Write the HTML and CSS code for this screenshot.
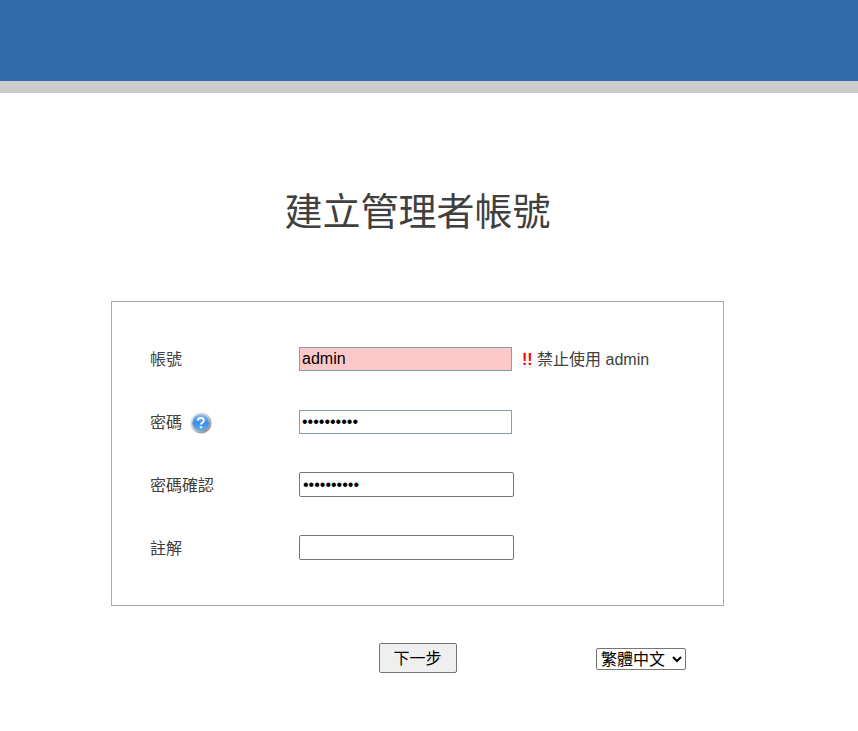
FILE: index.html
```html
<!DOCTYPE html>
<html lang="zh-Hant">
<head>
<meta charset="utf-8">
<meta name="viewport" content="width=device-width, initial-scale=1">
<title>建立管理者帳號</title>
<link rel="stylesheet" href="styles.css">
</head>
<body>
<header class="banner"></header>
<main class="page">
  <h1 class="title">建立管理者帳號</h1>
  <form class="setup">
    <div class="panel">
      <div class="row">
        <div class="name"><label for="account">帳號</label></div>
        <input class="field checked invalid" id="account" type="text" value="admin">
        <p class="message"><strong class="mark">!!</strong> 禁止使用 admin</p>
      </div>
      <div class="row">
        <div class="name">
          <label for="password">密碼</label>
          <svg class="help" viewBox="0 0 22 22" aria-hidden="true">
            <defs>
              <linearGradient id="ring" x1="0" y1="0" x2="1" y2="1">
                <stop offset="0" stop-color="#f0f0f0"/>
                <stop offset="0.5" stop-color="#c8c8c8"/>
                <stop offset="1" stop-color="#777"/>
              </linearGradient>
              <linearGradient id="ball" x1="0" y1="0" x2="0" y2="1">
                <stop offset="0" stop-color="#86b8f0"/>
                <stop offset="0.5" stop-color="#3d8de6"/>
                <stop offset="1" stop-color="#5cb0fa"/>
              </linearGradient>
            </defs>
            <circle cx="11" cy="11" r="10.6" fill="url(#ring)"/>
            <circle cx="10.7" cy="10.7" r="8.3" fill="url(#ball)"/>
            <path d="M7.8 8.6C8 6.8 9.2 6.1 10.8 6.1c1.7 0 3 .9 3 2.4 0 2.1-2.8 2.2-2.8 4.1" fill="none" stroke="#f4f8ff" stroke-width="2"/>
            <circle cx="11" cy="15.2" r="1.2" fill="#f4f8ff"/>
          </svg>
        </div>
        <input class="field checked" id="password" type="password" value="abcdefghij">
      </div>
      <div class="row">
        <div class="name"><label for="confirm">密碼確認</label></div>
        <input class="field" id="confirm" type="password" value="abcdefghij">
      </div>
      <div class="row">
        <div class="name"><label for="note">註解</label></div>
        <input class="field" id="note" type="text">
      </div>
    </div>
    <div class="actions">
      <button class="next" type="button">下一步</button>
      <select class="language" aria-label="語言">
        <option>繁體中文</option>
      </select>
    </div>
  </form>
</main>
</body>
</html>
```

FILE: styles.css
```css
* {
  box-sizing: border-box;
}

body {
  margin: 0;
  background: #fff;
  color: #404040;
  font: 16px/24px "Liberation Sans", "Noto Sans CJK TC", sans-serif;
}

.banner {
  height: 93px;
  background: #336aab;
  border-bottom: 12px solid #ccc;
}

.page {
  padding: 92px 134px 56px 111px;
}

.title {
  margin: 0 0 62px;
  font-size: 38px;
  font-weight: 400;
  line-height: 54px;
  text-align: center;
}

.panel {
  padding: 25px 38px 26px;
  border: 1px solid #aaa;
}

.row {
  display: flex;
  align-items: center;
  min-height: 63px;
}

.name {
  display: flex;
  flex: 0 0 149px;
  align-items: center;
  gap: 8px;
}

.name,
.message {
  padding-top: 2px;
}

.help {
  width: 22px;
  height: 22px;
}

.field {
  width: 215px;
  height: 25px;
  margin: 0;
  padding: 0 3px;
  border: 1px solid #767676;
  border-radius: 2px;
  background: #fff;
  color: #000;
  font: inherit;
}

.checked {
  width: 213px;
  height: 24px;
  padding: 0 2px;
  border-color: #7f9db9;
  border-radius: 0;
}

.invalid {
  background: #ffc8c8;
}

.message {
  margin: 0 0 0 10px;
}

.mark {
  color: #f00;
}

.actions {
  display: grid;
  grid-template-columns: 1fr auto 1fr;
  align-items: center;
  padding: 37px 38px 0;
}

.next {
  grid-column: 2;
  width: 78px;
  height: 30px;
  padding: 2px 0 0;
  border: 1px solid #767676;
  border-radius: 2px;
  background: #efefef;
  color: #000;
  font: inherit;
}

.language {
  justify-self: end;
  height: 22px;
  margin-top: 2px;
  padding: 0 3px 0 0;
  border: 1px solid #767676;
  border-radius: 2px;
  background: #fff;
  color: #000;
  font: inherit;
}
```
